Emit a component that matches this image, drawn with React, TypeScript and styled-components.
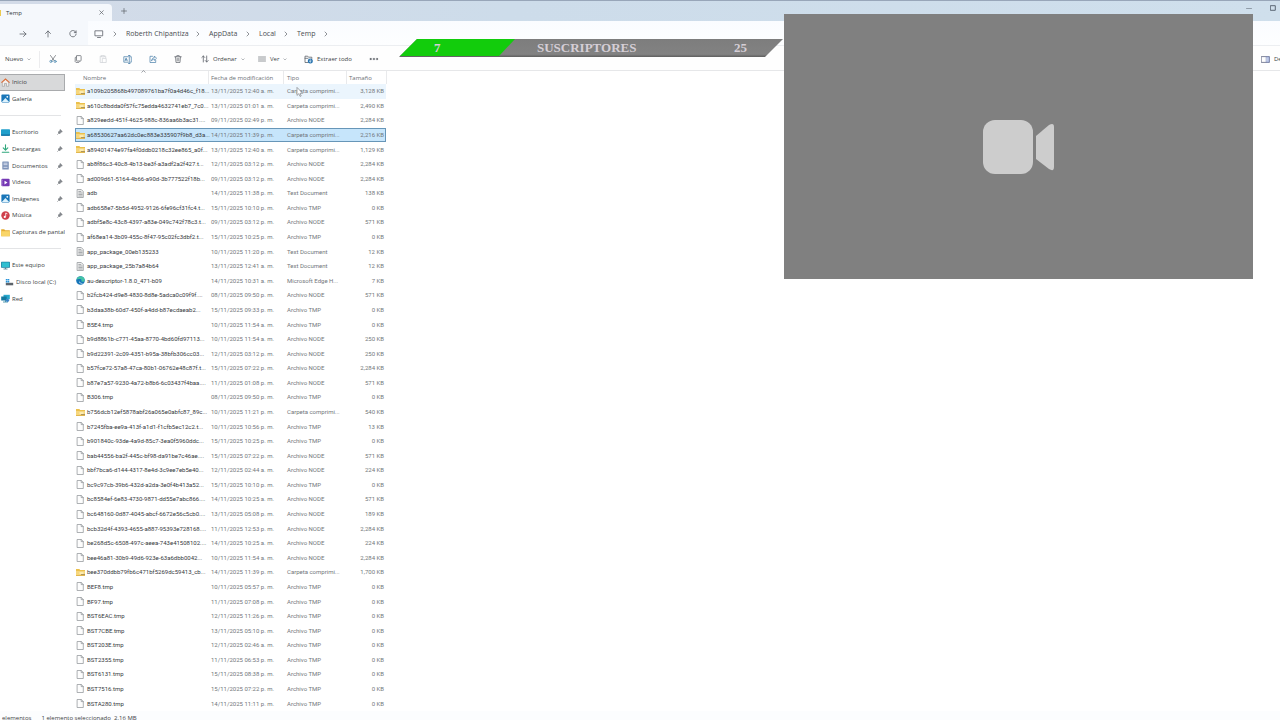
import React from "react";
import styled, { createGlobalStyle, css } from "styled-components";

const GlobalStyle = createGlobalStyle`
  *, *::before, *::after { box-sizing: border-box; }
  html, body { margin: 0; padding: 0; }
  body {
    font-family: "Open Sans", "Noto Sans", sans-serif;
    font-size: 6px;
    line-height: 10px;
    color: #3c3f44;
    background: #ffffff;
    overflow: hidden;
  }
  button { font: inherit; color: inherit; background: none; border: 0; padding: 0; margin: 0; cursor: default; }
  a { color: inherit; text-decoration: none; }
  svg { display: block; flex: none; }
`;

const Desktop = styled.div`
  position: relative;
  min-height: 100vh;
  overflow: hidden;
`;

const Explorer = styled.div`
  display: flex;
  flex-direction: column;
  height: 100vh;
  overflow: hidden;
  background: #ffffff;
`;

const TitleBar = styled.header`
  display: flex;
  align-items: stretch;
  height: 21px;
  border-top: 1px solid #98a6b9;
  background: linear-gradient(90deg, #d3dbe8 0%, #cddcea 40%, #cfdfec 100%);
`;

const Tab = styled.div`
  display: flex;
  align-items: center;
  justify-content: space-between;
  width: 112px;
  margin-top: 3px;
  padding: 0 6px 0 0;
  border-radius: 0 4px 0 0;
  background: #f5f8fc;
  color: #33363b;
`;

const TabTitle = styled.span`
  display: flex;
  align-items: center;
  gap: 5px;
`;

const FolderEdge = styled.i`
  width: 1px;
  height: 6px;
  background: #eccb4f;
`;

const IconButton = styled.button<{ $width?: number }>`
  display: flex;
  align-items: center;
  justify-content: center;
  width: ${(p) => p.$width ?? 25}px;
  height: 100%;
  flex: none;
`;

const WindowControls = styled.div`
  display: flex;
  height: 14px;
  margin-left: auto;
  margin-right: -5px;
`;

const AddressRow = styled.nav`
  display: flex;
  align-items: stretch;
  height: 25px;
  border-bottom: 1px solid #eceef1;
  background: #f5f8fc;
`;

const NavButtons = styled.div`
  display: flex;
  width: 88px;
  padding: 1px 0 0 10px;
  overflow: hidden;
`;

const AddressField = styled.div`
  display: flex;
  align-items: center;
  flex: 1;
  padding: 2px 0 0 6px;
  background: linear-gradient(#fafcff, #fdfeff);
  font-size: 7px;
  color: #4a4d52;
`;

const Crumb = styled.a<{ $width: number }>`
  width: ${(p) => p.$width}px;
  white-space: nowrap;
`;

const CrumbArrow = styled.span`
  display: flex;
  justify-content: center;
  width: 22px;
`;

const Toolbar = styled.div`
  display: flex;
  align-items: center;
  height: 25px;
  padding-top: 2px;
  border-bottom: 1px solid #e6e7e9;
  background: #fefefe;
`;

const ToolButton = styled.button<{ $width: number; $left?: number }>`
  display: flex;
  align-items: center;
  gap: 4px;
  width: ${(p) => p.$width}px;
  padding-left: ${(p) => p.$left ?? 0}px;
  height: 22px;
  flex: none;
  white-space: nowrap;
`;

const ToolDivider = styled.i`
  width: 1px;
  height: 17px;
  background: #ececee;
`;

const DetailsButton = styled(ToolButton)`
  margin-left: auto;
  overflow: hidden;
`;

const Body = styled.div`
  display: flex;
  flex: 1;
  min-height: 0;
`;

const Sidebar = styled.aside`
  width: 75px;
  padding-top: 3px;
  flex: none;
`;

const SideList = styled.ul`
  display: grid;
  grid-template-columns: minmax(0, 1fr);
  grid-template-rows: repeat(14, 1fr);
  width: 65px;
  height: 233px;
  margin: 0;
  padding: 0;
  list-style: none;
`;

const SideItem = styled.li`
  display: flex;
  min-height: 0;
`;

const SideLink = styled.a<{ $active?: boolean; $nested?: boolean }>`
  display: flex;
  align-items: center;
  gap: 2px;
  flex: 1;
  min-width: 0;
  padding-left: ${(p) => (p.$nested ? 5 : 1)}px;
  border: 1px solid transparent;
  border-left: 0;
  border-right-width: ${(p) => (p.$active ? 1 : 0)}px;
  white-space: nowrap;
  ${(p) =>
    p.$active &&
    css`
      background: #d8d9da;
      border-color: #a9abad;
    `}
`;

const SideLabel = styled.span`
  flex: 1;
  min-width: 0;
  overflow: hidden;
`;

const PinSlot = styled.span`
  padding-right: 2px;
`;

const SideDivider = styled.li`
  align-self: center;
  height: 1px;
  margin-right: 4px;
  background: #e3e4e6;
`;

const Files = styled.main`
  flex: 1;
  display: flex;
  min-width: 0;
`;

const FileTable = styled.table`
  display: flex;
  flex-direction: column;
  width: 312px;
  height: 100%;
`;

const HeadGroup = styled.thead`
  display: block;
`;

const HeadRow = styled.tr`
  display: grid;
  grid-template-columns: 134px 75px 63px 40px;
  height: 13px;
`;

const HeadCell = styled.th<{ $left: number }>`
  position: relative;
  padding: 2px 0 0 ${(p) => p.$left}px;
  border-right: 1px solid #e9eaec;
  text-align: left;
  font-weight: 400;
  white-space: nowrap;
  color: #6c7076;
`;

const SortMark = styled.span`
  position: absolute;
  top: -1px;
  left: 66px;
`;

const Rows = styled.tbody`
  display: flex;
  flex-direction: column;
  flex: 1;
  min-height: 0;
  font-family: Roboto, "Open Sans", sans-serif;
`;

const FileRow = styled.tr<{ $state?: "hover" | "selected" }>`
  display: grid;
  grid-template-columns: 135px 76px 59px 40px;
  align-items: center;
  flex: 1;
  min-height: 0;
  width: 311px;
  border: 1px solid transparent;
  ${(p) =>
    p.$state === "hover" &&
    css`
      background: #ebf5fd;
    `}
  ${(p) =>
    p.$state === "selected" &&
    css`
      background: #c6e5fb;
      border-color: #6796b8;
    `}
`;

const Cell = styled.td<{ $right?: boolean }>`
  padding: 0 ${(p) => (p.$right ? 2 : 0)}px 0 0;
  text-align: ${(p) => (p.$right ? "right" : "left")};
  white-space: nowrap;
  color: #73777c;
`;

const NameCell = styled.td`
  display: flex;
  align-items: center;
  gap: 2px;
  padding: 0;
  white-space: nowrap;
  color: #36393d;
`;

const StatusBar = styled.footer`
  display: flex;
  gap: 10px;
  height: 9px;
  padding: 2px 0 0 2px;
  overflow: hidden;
  background: #fcfdfe;
`;

const Goal = styled.div`
  position: absolute;
  top: 39px;
  left: 399px;
  width: 384px;
  height: 18px;
  clip-path: polygon(18px 0, 100% 0, 366px 100%, 0 100%);
  display: flex;
  align-items: flex-start;
  background: linear-gradient(#7d7d7d, #828282 85%, #5e5e5e);
  font-family: "Liberation Serif", serif;
  font-weight: 700;
  font-size: 13px;
  line-height: 17px;
  color: #d5ced6;
`;

const GoalFill = styled.div`
  width: 116px;
  height: 17px;
  padding-left: 35px;
  background: #12cc0c;
  clip-path: polygon(0 0, 100% 0, 100px 100%, 0 100%);
`;

const GoalName = styled.span`
  margin-left: 22px;
`;

const GoalTarget = styled.span`
  margin-left: auto;
  padding-right: 36px;
`;

const Camera = styled.section`
  position: absolute;
  top: 14px;
  right: 27px;
  width: 469px;
  height: 265px;
  display: flex;
  align-items: center;
  justify-content: center;
  background: #808080;
`;

type LineProps = { w: number; h?: number; color?: string; stroke?: number; children: React.ReactNode };

const Line = ({ w, h = w, color = "#5d6269", stroke = 1, children }: LineProps) => (
  <svg width={w} height={h} viewBox={`0 0 ${w} ${h}`} fill="none" stroke={color} strokeWidth={stroke} strokeLinecap="round" strokeLinejoin="round" aria-hidden="true">
    {children}
  </svg>
);

const Chevron = () => <Line w={4} h={6} stroke={0.8} color="#73777d"><path d="M1 1l2 2-2 2" /></Line>;
const DownMark = () => <Line w={4} h={3} stroke={0.6} color="#85898e"><path d="M.8.8L2 2 3.200.8" /></Line>;

const ZipIcon = () => (
  <svg width="9" height="9" viewBox="0 0 9 9" aria-hidden="true">
    <path d="M0 1h3.300l.9 1H9v6H0z" fill="#ebc04c" />
    <path d="M0 3h9v5H0z" fill="#f6d67c" />
    <path d="M3.500 4.300h4v1.500h-4z" fill="#fdf2c7" />
    <path d="M5 6h4v.9H5z" fill="#a98f55" />
    <path d="M0 7.300h9V8H0z" fill="#d9aa3c" />
  </svg>
);

const PageIcon = () => (
  <Line w={9} color="#8b8f94" stroke={0.7}>
    <path d="M1.500.5h3.800l2 2v6H1.500z" fill="#fdfdfd" />
    <path d="M5.200.6v2h2" />
  </Line>
);

const TextIcon = () => (
  <Line w={9} color="#8b8f94" stroke={0.7}>
    <path d="M1.500.5h3.800l2 2v6H1.500z" fill="#eeeeee" />
    <path d="M2.800 2.500h2M2.800 4h3.300M2.800 5.500h3.300M2.800 7h3.300" />
  </Line>
);

const EdgeIcon = () => (
  <svg width="9" height="9" viewBox="0 0 9 9" aria-hidden="true">
    <circle cx="4.500" cy="4.500" r="4.300" fill="#1675b9" />
    <path d="M.4 3.700C1.200 1 3.200.2 4.800.2 7.500.3 9 2.500 8.700 4.400 8.300 6 6 6.100 5.300 5.300c.7-1 .1-2.300-1.300-2.300C2.400 3 1 3.200.4 3.700z" fill="#43c3a5" />
    <path d="M3.400 4.300c-.5 1.500.8 3.200 3.600 2.600-1.500 1.500-4.800.6-3.600-2.600z" fill="#e7f6fb" />
  </svg>
);

const fileIcons = { zip: ZipIcon, page: PageIcon, text: TextIcon, edge: EdgeIcon };

const HomeIcon = () => (
  <svg width="9" height="9" viewBox="0 0 9 9" aria-hidden="true">
    <path d="M1.300 4v4.300h2.200V5.500h2v2.800h2.200V4L4.500 1.200z" fill="#f3efec" stroke="#96989b" strokeWidth=".6" />
    <path d="M.4 4.700L4.500 1l4.100 3.700" fill="none" stroke="#e0713c" strokeWidth="1.100" />
  </svg>
);
const PhotoIcon = () => (
  <svg width="9" height="9" viewBox="0 0 9 9" aria-hidden="true">
    <rect x=".4" y=".6" width="8.200" height="7.800" rx=".8" fill="#1976b8" />
    <path d="M.8 8.100l3.600-4 3.700 4z" fill="#ddf2fd" />
    <circle cx="6.300" cy="2.800" r=".9" fill="#ffffff" />
  </svg>
);
const DeskIcon = () => (
  <svg width="9" height="9" viewBox="0 0 9 9" aria-hidden="true">
    <rect x="0" y="1.300" width="9" height="6.400" rx=".7" fill="#209fcb" />
    <path d="M0 6.500h9v.6a.6.6 0 0 1-.6.6H.6a.6.6 0 0 1-.6-.6z" fill="#126d9d" />
  </svg>
);
const DownloadIcon = () => <Line w={9} color="#2fa77c" stroke={1.1}><path d="M4.500.7v5M2.200 3.800l2.300 2.300 2.300-2.300M1.300 8.200h6.500" /></Line>;
const DocsIcon = () => (
  <svg width="9" height="9" viewBox="0 0 9 9" aria-hidden="true">
    <rect x="1.300" y=".4" width="6.500" height="8.200" rx=".6" fill="#7e93b9" />
    <path d="M2.500 2.200h4M2.500 3.700h4M2.500 6.300h4" stroke="#e9eef8" strokeWidth=".8" />
  </svg>
);
const VideoIcon = () => (
  <svg width="9" height="9" viewBox="0 0 9 9" aria-hidden="true">
    <rect x=".4" y=".8" width="8.200" height="7.500" rx="1" fill="#7538b4" />
    <path d="M3.500 2.700v3.700l3-1.850z" fill="#ffffff" />
    <path d="M1.400 1.800v6" stroke="#ceb0ee" strokeWidth=".6" strokeDasharray=".9 .9" />
  </svg>
);
const MusicIcon = () => (
  <svg width="9" height="9" viewBox="0 0 9 9" aria-hidden="true">
    <circle cx="4.500" cy="4.500" r="4.200" fill="#cf3f4c" />
    <path d="M4.700 5.700V2l1.700.8" fill="none" stroke="#ffffff" strokeWidth=".8" />
    <circle cx="3.800" cy="5.900" r="1.100" fill="#ffffff" />
  </svg>
);
const FolderIcon = () => (
  <svg width="9" height="9" viewBox="0 0 9 9" aria-hidden="true">
    <path d="M.2 1.200h3l1 1h4.600v6H.2z" fill="#e4ac31" />
    <path d="M.2 3.200h8.600v5H.2z" fill="#f9d568" />
  </svg>
);
const PcIcon = () => (
  <svg width="9" height="9" viewBox="0 0 9 9" aria-hidden="true">
    <rect x=".1" y=".8" width="8.800" height="6" rx=".5" fill="#187b9f" />
    <rect x=".8" y="1.400" width="7.400" height="4.700" fill="#30bfd0" />
    <path d="M2.500 8h4M4.500 6.800V8" stroke="#447487" strokeWidth=".8" />
  </svg>
);
const DriveIcon = () => (
  <svg width="9" height="9" viewBox="0 0 9 9" aria-hidden="true">
    <path d="M.8 4.800h7.400v2.500H.8z" fill="#5c636b" />
    <path d="M.8 1h1.600v1.600H.8zM2.700 1h1.600v1.600H2.700zM.8 2.900h1.600v1.500H.8zM2.700 2.900h1.600v1.500H2.700z" fill="#2793da" />
  </svg>
);
const NetIcon = () => (
  <svg width="9" height="9" viewBox="0 0 9 9" aria-hidden="true">
    <rect x="2.500" y=".8" width="6.300" height="4.500" fill="#27a7cc" />
    <rect x=".2" y="2.500" width="5.500" height="4" fill="#14799f" />
    <path d="M2 8h5M4.500 6v2" stroke="#3f8fa8" strokeWidth=".9" />
    <circle cx="6.500" cy="6.300" r="1.600" fill="#3b83c9" />
  </svg>
);
const PinIcon = () => (
  <Line w={6} color="#6b7076" stroke={0.6}>
    <path d="M3.400.7l1.900 1.900-1.500.7-1 1.500-1.700-1.700 1.500-.9z" fill="#85898f" />
    <path d="M2 4L.6 5.400" />
  </Line>
);

type Side = { label: string; icon: () => React.ReactElement; pin?: boolean; active?: boolean; nested?: boolean };

const sideItems: (Side | null)[] = [
  { label: "Inicio", icon: HomeIcon, active: true },
  { label: "Galería", icon: PhotoIcon },
  null,
  { label: "Escritorio", icon: DeskIcon, pin: true },
  { label: "Descargas", icon: DownloadIcon, pin: true },
  { label: "Documentos", icon: DocsIcon, pin: true },
  { label: "Videos", icon: VideoIcon, pin: true },
  { label: "Imágenes", icon: PhotoIcon, pin: true },
  { label: "Música", icon: MusicIcon, pin: true },
  { label: "Capturas de pantalla", icon: FolderIcon },
  null,
  { label: "Este equipo", icon: PcIcon },
  { label: "Disco local (C:)", icon: DriveIcon, nested: true },
  { label: "Red", icon: NetIcon },
];

type IconKind = keyof typeof fileIcons;
type FileEntry = [icon: IconKind, name: string, date: string, type: string, size: string];

const ZIP = "Carpeta comprimi...";
const NODE = "Archivo NODE";
const TMP = "Archivo TMP";
const TXT = "Text Document";

const files: FileEntry[] = [
  ["zip", "a109b205868b497089761ba7f0a4d46c_f18...", "13/11/2025 12:40 a. m.", ZIP, "3,128 KB"],
  ["zip", "a610c8bdda0f57fc75edda4632741eb7_7c0...", "13/11/2025 01:01 a. m.", ZIP, "2,490 KB"],
  ["page", "a829eedd-451f-4625-988c-836aa6b3ac31....", "09/11/2025 02:49 p. m.", NODE, "2,284 KB"],
  ["zip", "a68530627aa62dc0ec883e335907f9b8_d3a...", "14/11/2025 11:39 p. m.", ZIP, "2,216 KB"],
  ["zip", "a89401474e97fa4f0ddb0218c32ee865_a0f...", "13/11/2025 12:40 a. m.", ZIP, "1,129 KB"],
  ["page", "ab8f86c3-40c8-4b13-be3f-a3adf2a2f427.t...", "12/11/2025 03:12 p. m.", NODE, "2,284 KB"],
  ["page", "ad009d61-5164-4b66-a90d-3b777522f18b...", "09/11/2025 03:12 p. m.", NODE, "2,284 KB"],
  ["text", "adb", "14/11/2025 11:38 p. m.", TXT, "138 KB"],
  ["page", "adb658e7-5b5d-4952-9126-6fe96cf31fc4.t...", "15/11/2025 10:10 p. m.", TMP, "0 KB"],
  ["page", "adbf5e8c-43c8-4397-a83e-049c742f78c3.t...", "09/11/2025 03:12 p. m.", NODE, "571 KB"],
  ["page", "af68ea14-3b09-455c-8f47-95c02fc3dbf2.t...", "15/11/2025 10:25 p. m.", TMP, "0 KB"],
  ["text", "app_package_00eb135233", "10/11/2025 11:20 p. m.", TXT, "12 KB"],
  ["text", "app_package_25b7a84b64", "13/11/2025 12:41 a. m.", TXT, "12 KB"],
  ["edge", "au-descriptor-1.8.0_471-b09", "14/11/2025 10:31 a. m.", "Microsoft Edge H...", "7 KB"],
  ["page", "b2fcb424-d9e8-4830-8d8e-5adca0c09f9f....", "08/11/2025 09:50 p. m.", NODE, "571 KB"],
  ["page", "b3daa38b-60d7-450f-a4dd-b87ecdaeab2...", "15/11/2025 09:33 p. m.", TMP, "0 KB"],
  ["page", "B5E4.tmp", "10/11/2025 11:54 a. m.", TMP, "0 KB"],
  ["page", "b9d8861b-c771-45aa-8770-4bd60fd97113...", "10/11/2025 11:54 a. m.", NODE, "250 KB"],
  ["page", "b9d22391-2c09-4351-b95a-38bfb306cc03...", "12/11/2025 03:12 p. m.", NODE, "250 KB"],
  ["page", "b57fce72-57a8-47ca-80b1-06762e48c87f.t...", "15/11/2025 07:22 p. m.", NODE, "2,284 KB"],
  ["page", "b87e7a57-9230-4a72-b8b6-6c03437f4baa....", "11/11/2025 01:08 p. m.", NODE, "571 KB"],
  ["page", "B306.tmp", "08/11/2025 09:50 p. m.", TMP, "0 KB"],
  ["zip", "b756dcb12ef5878abf26a065e0abfc87_89c...", "10/11/2025 11:21 p. m.", ZIP, "540 KB"],
  ["page", "b7245fba-ee9a-413f-a1d1-f1cfb5ec12c2.t...", "10/11/2025 10:56 p. m.", TMP, "13 KB"],
  ["page", "b901840c-93de-4a9d-85c7-3ea0f5960ddc...", "15/11/2025 10:25 p. m.", TMP, "0 KB"],
  ["page", "bab44556-ba2f-445c-bf98-da91be7c46ae....", "15/11/2025 07:22 p. m.", NODE, "571 KB"],
  ["page", "bbf7bca6-d144-4317-8e4d-3c9ee7eb5e40...", "12/11/2025 02:44 a. m.", NODE, "224 KB"],
  ["page", "bc9c97cb-39b6-432d-a2da-3e0f4b413a52...", "15/11/2025 10:10 p. m.", TMP, "0 KB"],
  ["page", "bc8584ef-6e83-4730-9871-dd55e7abc866....", "14/11/2025 10:25 a. m.", NODE, "571 KB"],
  ["page", "bc648160-0d87-4045-abcf-6672e56c5cb0....", "13/11/2025 05:08 p. m.", NODE, "189 KB"],
  ["page", "bcb32d4f-4393-4655-a887-95393e728168....", "11/11/2025 12:53 p. m.", NODE, "2,284 KB"],
  ["page", "be268d5c-6508-497c-aeea-743e41508102....", "14/11/2025 10:25 a. m.", NODE, "224 KB"],
  ["page", "bee46a81-30b9-49d6-923e-63a6dbb0042...", "10/11/2025 11:54 a. m.", NODE, "2,284 KB"],
  ["zip", "bee370ddbb79fb6c471bf5269dc59413_cb...", "14/11/2025 11:39 p. m.", ZIP, "1,700 KB"],
  ["page", "BEF8.tmp", "10/11/2025 05:57 p. m.", TMP, "0 KB"],
  ["page", "BF97.tmp", "11/11/2025 07:08 p. m.", TMP, "0 KB"],
  ["page", "BST6EAC.tmp", "12/11/2025 11:26 p. m.", TMP, "0 KB"],
  ["page", "BST7CBE.tmp", "13/11/2025 05:10 p. m.", TMP, "0 KB"],
  ["page", "BST203E.tmp", "12/11/2025 02:46 a. m.", TMP, "0 KB"],
  ["page", "BST2355.tmp", "11/11/2025 06:53 p. m.", TMP, "0 KB"],
  ["page", "BST6131.tmp", "15/11/2025 08:38 p. m.", TMP, "0 KB"],
  ["page", "BST7516.tmp", "15/11/2025 07:22 p. m.", TMP, "0 KB"],
  ["page", "BSTA280.tmp", "14/11/2025 11:11 p. m.", TMP, "0 KB"],
];

const rowStates: Record<number, "hover" | "selected"> = { 0: "hover", 3: "selected" };

const crumbs = [
  { label: "Roberth Chipantiza", width: 61 },
  { label: "AppData", width: 28 },
  { label: "Local", width: 16 },
  { label: "Temp", width: 18 },
];

const Pointer = styled.span`
  position: absolute;
  top: 87px;
  left: 296px;
`;

export default function App() {
  return (
    <Desktop>
      <GlobalStyle />
      <Explorer>
        <TitleBar>
          <Tab>
            <TabTitle><FolderEdge />Temp</TabTitle>
            <IconButton $width={9} aria-label="Cerrar pestaña">
              <Line w={5} stroke={0.7}><path d="M.7.7l3.600 3.600M4.300.7L.7 4.300" /></Line>
            </IconButton>
          </Tab>
          <IconButton $width={24} aria-label="Nueva pestaña">
            <Line w={6} stroke={0.7}><path d="M3 .5v5M.5 3h5" /></Line>
          </IconButton>
          <WindowControls>
            <IconButton $width={24} aria-label="Minimizar">
              <Line w={6} stroke={0.8} color="#808b98"><path d="M.5 3.500h5" /></Line>
            </IconButton>
            <IconButton $width={24} aria-label="Maximizar">
              <Line w={6} stroke={0.9} color="#4f5a68"><path d="M.7.7h4.600v4.600H.7z" /></Line>
            </IconButton>
          </WindowControls>
        </TitleBar>

        <AddressRow aria-label="Navegación">
          <NavButtons>
            <IconButton aria-label="Adelante"><Line w={8} stroke={0.8}><path d="M1 4h6M4.500 1.500L7 4 4.500 6.500" /></Line></IconButton>
            <IconButton aria-label="Subir"><Line w={8} stroke={0.8}><path d="M4 7V1M1.500 3.500L4 1l2.500 2.500" /></Line></IconButton>
            <IconButton aria-label="Actualizar"><Line w={8} stroke={0.8}><path d="M7 2.500A3.200 3.200 0 1 0 7.200 4M7.100.8v1.800H5.300" /></Line></IconButton>
          </NavButtons>
          <AddressField>
            <Line w={10} h={8} stroke={0.8}><path d="M1.300.8h7.400v5H1.300zM3.500 7.500h3" /></Line>
            <CrumbArrow><Chevron /></CrumbArrow>
            {crumbs.map((c) => (
              <React.Fragment key={c.label}>
                <Crumb href="#" $width={c.width}>{c.label}</Crumb>
                <CrumbArrow><Chevron /></CrumbArrow>
              </React.Fragment>
            ))}
          </AddressField>
        </AddressRow>

        <Toolbar role="toolbar" aria-label="Comandos">
          <ToolButton $width={39} $left={5}>Nuevo<DownMark /></ToolButton>
          <ToolDivider />
          <IconButton aria-label="Cortar">
            <Line w={8} stroke={0.7}><path d="M1.500.5l3.800 5.300M6.500.5L2.700 5.800" /><circle cx="1.900" cy="6.400" r="1.100" stroke="#4484ae" /><circle cx="6.100" cy="6.400" r="1.100" stroke="#4484ae" /></Line>
          </IconButton>
          <IconButton aria-label="Copiar">
            <Line w={8} stroke={0.7}><path d="M3 .6h3.400a.7.7 0 0 1 .7.7v4a.7.7 0 0 1-.7.7H3.200a.7.7 0 0 1-.7-.7V1.200zM2.200 2l-1 .5v4.200l.7.7h3l.7-.8" /></Line>
          </IconButton>
          <IconButton aria-label="Pegar">
            <Line w={8} stroke={0.7} color="#cdd0d4"><path d="M2.700 1.200H1.200v6.300h2M5.300 1.200h1.400v1.500M2.700.6h2.600v1.200H2.700zM3.700 3.400h3.500v4.100H3.700z" /></Line>
          </IconButton>
          <IconButton aria-label="Cambiar nombre">
            <Line w={9} stroke={0.7} color="#467da8"><path d="M5.300 1.700H.8v5.500h4.500M7.300 1.700h1v5.500h-1M6.300.5v8M5.500.5H7M5.500 8.500H7M2 5.800l1.100-2.900 1.100 2.900M2.400 4.900h1.500" /></Line>
          </IconButton>
          <IconButton aria-label="Compartir">
            <Line w={8} stroke={0.7} color="#467da8"><path d="M3.500 1.300H1v6.200h5.700V5.300M2.700 5.500c.2-2 1.200-2.800 2.600-2.800V1L7.600 3.300 5.300 5.400V4C4 4 3.300 4.500 2.700 5.500z" /></Line>
          </IconButton>
          <IconButton aria-label="Eliminar">
            <Line w={8} stroke={0.7}><path d="M.7 1.800h6.600M2.800 1.600V.6h2.400v1M1.500 1.900l.5 5.600h4l.5-5.600M3.200 3.300v2.700M4.800 3.300v2.700" /></Line>
          </IconButton>
          <ToolButton $width={57} $left={11}>
            <Line w={8} stroke={0.8}><path d="M2.300 7V1M.8 2.500L2.300 1l1.500 1.500M5.700 1v6M4.200 5.500L5.700 7l1.500-1.500" /></Line>
            Ordenar<DownMark />
          </ToolButton>
          <ToolButton $width={46} $left={11}>
            <Line w={8} stroke={0.8} color="#797d83"><path d="M.5 2h7M.5 4h7M.5 6h7" /></Line>
            Ver<DownMark />
          </ToolButton>
          <ToolButton $width={76} $left={11}>
            <Line w={9} stroke={0.8}><path d="M4 7.500H1V1.200h2.700l.8 1h3.300v1.300M1 3.300h3" /><circle cx="6.300" cy="6" r="2.500" fill="#2471ad" stroke="none" /><path d="M6.300 4.700v2.200M5.400 6.200l.9.8.9-.8" stroke="#ffffff" strokeWidth=".6" /></Line>
            Extraer todo
          </ToolButton>
          <IconButton $width={10} aria-label="Ver más">
            <Line w={10} h={4} stroke={0.2}><path d="M1 1.300h1.500v1.500H1zM4.200 1.300h1.500v1.500H4.200zM7.400 1.300h1.500v1.500H7.400z" fill="#4d5157" /></Line>
          </IconButton>
          <DetailsButton $width={19}>
            <Line w={9} h={7} stroke={0.8} color="#5d6580"><path d="M.6.6h7.800v5.800H.6z" /><path d="M5.500.8h2.700v5.400H5.500z" fill="#bfc9e8" stroke="#6d7cb0" strokeWidth=".5" /></Line>
            Detalles
          </DetailsButton>
        </Toolbar>

        <Body>
          <Sidebar>
            <SideList>
              {sideItems.map((item, i) =>
                item ? (
                  <SideItem key={item.label}>
                    <SideLink href="#" $active={item.active} $nested={item.nested}>
                      <item.icon />
                      <SideLabel>{item.label}</SideLabel>
                      {item.pin && <PinSlot><PinIcon /></PinSlot>}
                    </SideLink>
                  </SideItem>
                ) : (
                  <SideDivider key={`divider-${i}`} role="separator" />
                )
              )}
            </SideList>
          </Sidebar>

          <Files>
            <FileTable>
              <HeadGroup>
                <HeadRow>
                  <HeadCell $left={8}>
                    Nombre
                    <SortMark><Line w={5} h={3} stroke={0.6}><path d="M.8 2.200L2.500.6l1.700 1.600" /></Line></SortMark>
                  </HeadCell>
                  <HeadCell $left={2}>Fecha de modificación</HeadCell>
                  <HeadCell $left={3}>Tipo</HeadCell>
                  <HeadCell $left={2}>Tamaño</HeadCell>
                </HeadRow>
              </HeadGroup>
              <Rows>
                {files.map(([icon, name, date, type, size], i) => {
                  const Icon = fileIcons[icon];
                  return (
                    <FileRow key={name} $state={rowStates[i]}>
                      <NameCell><Icon />{name}</NameCell>
                      <Cell>{date}</Cell>
                      <Cell>{type}</Cell>
                      <Cell $right>{size}</Cell>
                    </FileRow>
                  );
                })}
              </Rows>
            </FileTable>
          </Files>
        </Body>

        <StatusBar>
          <span>elementos</span>
          <span>1 elemento seleccionado&nbsp; 2.16 MB</span>
        </StatusBar>
      </Explorer>

      <Pointer>
        <Line w={8} h={11} stroke={0.7} color="#7d8187"><path d="M1 .8v7.600l1.800-1.700 1.200 2.700 1.200-.5L4 6.300h2.400z" fill="#ffffff" /></Line>
      </Pointer>

      <Goal>
        <GoalFill>7</GoalFill>
        <GoalName>SUSCRIPTORES</GoalName>
        <GoalTarget>25</GoalTarget>
      </Goal>

      <Camera aria-label="Cámara">
        <svg width="72" height="54" viewBox="0 0 72 54" aria-hidden="true">
          <rect x="0" y="0" width="50" height="54" rx="12" fill="#cdcdcd" />
          <path d="M53 16L66 5q5-3 5 2v40q0 5-5 2L53 39z" fill="#cdcdcd" />
        </svg>
      </Camera>
    </Desktop>
  );
}
